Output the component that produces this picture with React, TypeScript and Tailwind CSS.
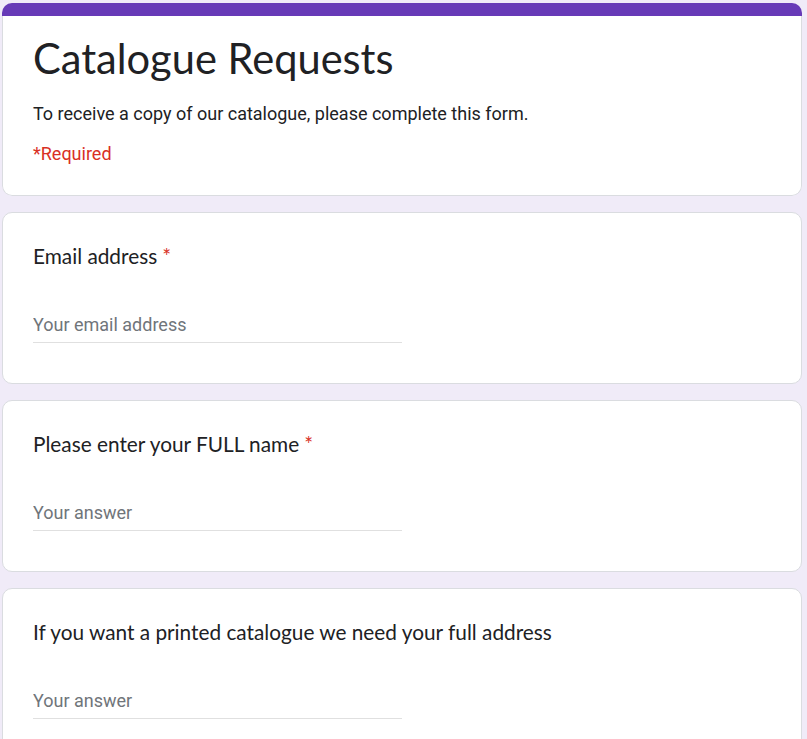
import React from "react";

interface QuestionProps {
  label: string;
  placeholder: string;
  required?: boolean;
}

const Question: React.FC<QuestionProps> = ({ label, placeholder, required }) => {
  return (
    <div className="h-[172px] w-[800px] shrink-0 rounded-[10px] border border-[#dadce0] bg-white px-[30px] pt-[28px]">
      <div className="font-['Lato',sans-serif] text-[20.8px] leading-[30px] text-[#202124]">
        {label}
        {required && <span className="ml-[5px] text-[#d93025]">*</span>}
      </div>
      <div className="mt-[42px] w-1/2 border-b border-[#e0e0e0] pb-[5px]">
        <input
          type="text"
          placeholder={placeholder}
          className="block h-[24px] w-full bg-transparent p-0 font-['Roboto',sans-serif] text-[18px] leading-[24px] text-[#202124] outline-none placeholder:text-[#70757a]"
        />
      </div>
    </div>
  );
};

export default function App() {
  return (
    <div className="h-[739px] overflow-hidden bg-[#f0ebf8] pl-[2px] pt-[3px]">
      <div className="flex flex-col gap-[16px]">
        {/* header card */}
        <div className="w-[800px] shrink-0 overflow-hidden rounded-[10px]">
          <div className="h-[13px] bg-[#673ab7]" />
          <div className="h-[180px] rounded-b-[10px] border-x border-b border-[#dadce0] bg-white px-[30px] pt-[18px]">
            <h1 className="font-['Lato',sans-serif] text-[41.6px] leading-[48px] text-[#202124]">
              Catalogue Requests
            </h1>
            <p className="mt-[20px] font-['Roboto',sans-serif] text-[18px] leading-[24px] text-[#202124]">
              To receive a copy of our catalogue, please complete this form.
            </p>
            <p className="mt-[16px] font-['Roboto',sans-serif] text-[18px] leading-[24px] text-[#d93025]">
              *Required
            </p>
          </div>
        </div>

        <Question label="Email address" placeholder="Your email address" required />
        <Question label="Please enter your FULL name" placeholder="Your answer" required />
        <Question
          label="If you want a printed catalogue we need your full address"
          placeholder="Your answer"
        />
      </div>
    </div>
  );
}
